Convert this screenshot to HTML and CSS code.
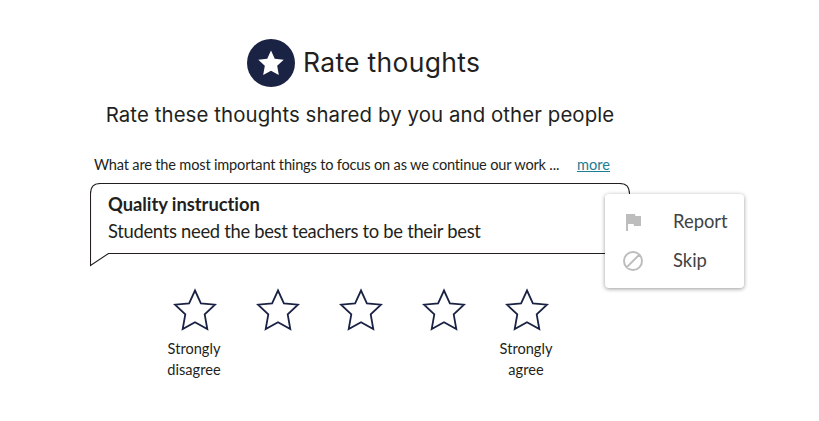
FILE: index.html
```html
<!DOCTYPE html>
<html lang="en">
<head>
    <meta charset="UTF-8"/>
    <meta name="viewport" content="width=device-width, initial-scale=1.0"/>
    <title>Rate thoughts</title>
    <link rel="stylesheet" href="styles.css">
</head>
<body>
<svg class="defs" width="0" height="0">
    <symbol id="star" viewBox="0 0 44 44">
        <path d="M22 2.5 L27.9 15.3 L42 16.7 L31.7 26.4 L34.3 41 L22 34.2 L9.7 41 L12.3 26.4 L2 16.7 L16.1 15.3 Z"/>
    </symbol>
</svg>
<main id="app">
    <header class="title">
        <span class="title-icon">
            <svg viewBox="0 0 44 44"><use href="#star"/></svg>
        </span>
        <h1>Rate thoughts</h1>
    </header>
    <h2 class="subtitle">Rate these thoughts shared by you and other people</h2>

    <div class="question">
        <span class="question-text">What are the most important things to focus on as we continue our work ...</span>
        <a class="more" href="#">more</a>
    </div>

    <section class="thought">
        <svg class="bubble" viewBox="0 0 540 84">
            <path d="M0.5 82.5 V10.5 Q0.5 0.5 10.5 0.5 H529.5 Q539.5 0.5 539.5 10.5 V60.5 Q539.5 70.5 529.5 70.5 H18.5 Z"/>
        </svg>
        <h3>Quality instruction</h3>
        <p>Students need the best teachers to be their best</p>
        <div class="menu">
            <div class="menu-item">
                <svg viewBox="0 0 24 24"><path fill="#bdbdbd" d="M14.4 6L14 4H5v17h2v-7h5.6l.4 2h7V6z"/></svg>
                <span>Report</span>
            </div>
            <div class="menu-item">
                <svg viewBox="0 0 24 24"><path fill="none" stroke="#bdbdbd" stroke-width="2" d="M12 3a9 9 0 1 0 0 18a9 9 0 1 0 0-18zM18.4 5.6L5.6 18.4"/></svg>
                <span>Skip</span>
            </div>
        </div>
    </section>

    <div class="rating">
        <div class="rate">
            <svg viewBox="0 0 44 44"><use href="#star"/></svg>
            <span>Strongly disagree</span>
        </div>
        <div class="rate"><svg viewBox="0 0 44 44"><use href="#star"/></svg></div>
        <div class="rate"><svg viewBox="0 0 44 44"><use href="#star"/></svg></div>
        <div class="rate"><svg viewBox="0 0 44 44"><use href="#star"/></svg></div>
        <div class="rate">
            <svg viewBox="0 0 44 44"><use href="#star"/></svg>
            <span>Strongly agree</span>
        </div>
    </div>
</main>
</body>
</html>
```
FILE: styles.css
```css
body {
    margin: 0;
    background-color: #fff;
    color: #231f20;
    font-family: Lato, sans-serif;
    font-variant-ligatures: none;
}

h1, h2, h3, p {
    margin: 0;
    font-weight: 400;
}

.defs {
    position: absolute;
}

#app {
    width: 540px;
    margin-left: 90px;
    padding-top: 39px;
}

.title {
    display: flex;
    align-items: center;
    height: 48px;
    margin-left: 157px;
    gap: 8px;
}

.title-icon {
    display: flex;
    align-items: center;
    justify-content: center;
    width: 48px;
    height: 48px;
    border-radius: 50%;
    background-color: #1b2344;
}

.title-icon svg {
    width: 28px;
    height: 28px;
    fill: #fff;
}

.title h1 {
    padding-bottom: 2px;
    font: 400 26.5px/32px Inter, sans-serif;
    letter-spacing: 0.3px;
    white-space: nowrap;
}

.subtitle {
    margin-top: 14px;
    font: 400 20.4px/28px Inter, sans-serif;
    letter-spacing: 0.09px;
    text-align: center;
    white-space: nowrap;
}

.question {
    display: flex;
    margin-top: 26px;
    padding-left: 4px;
    height: 28px;
    font-size: 14.6px;
    line-height: 20px;
    white-space: nowrap;
}

.question-text {
    width: 483px;
    letter-spacing: -0.19px;
}

.more {
    color: #1c7e92;
}

.thought {
    position: relative;
    box-sizing: border-box;
    height: 84px;
    padding: 8px 18px;
    font-size: 18.4px;
    line-height: 27px;
}

.thought h3 {
    font-size: 18.4px;
    font-weight: 700;
    letter-spacing: -0.05px;
}

.thought p {
    letter-spacing: -0.31px;
}

.bubble {
    position: absolute;
    top: 0;
    left: 0;
    width: 540px;
    height: 84px;
    fill: none;
    stroke: #231f20;
    stroke-width: 1.1;
}

.menu {
    position: absolute;
    top: 11px;
    left: 515px;
    box-sizing: border-box;
    width: 139px;
    height: 94px;
    padding: 8px 16px;
    border-radius: 4px;
    background-color: #fff;
    box-shadow: 0 1px 4px rgba(0, 0, 0, 0.4);
    color: #424242;
}

.menu-item {
    display: flex;
    align-items: center;
    height: 39px;
    gap: 28px;
}

.menu-item svg {
    width: 24px;
    height: 24px;
    flex-shrink: 0;
}

.rating {
    display: flex;
    margin-left: 63px;
    margin-top: 21px;
}

.rate {
    display: flex;
    flex-direction: column;
    align-items: center;
    width: 83px;
    font-size: 14.6px;
    line-height: 21px;
    text-align: center;
}

.rate svg {
    width: 44px;
    height: 44px;
    margin-bottom: 6px;
    fill: none;
    stroke: #1b2344;
    stroke-width: 1.8;
}

.rate span {
    width: 60px;
    margin-left: -1px;
}
```
